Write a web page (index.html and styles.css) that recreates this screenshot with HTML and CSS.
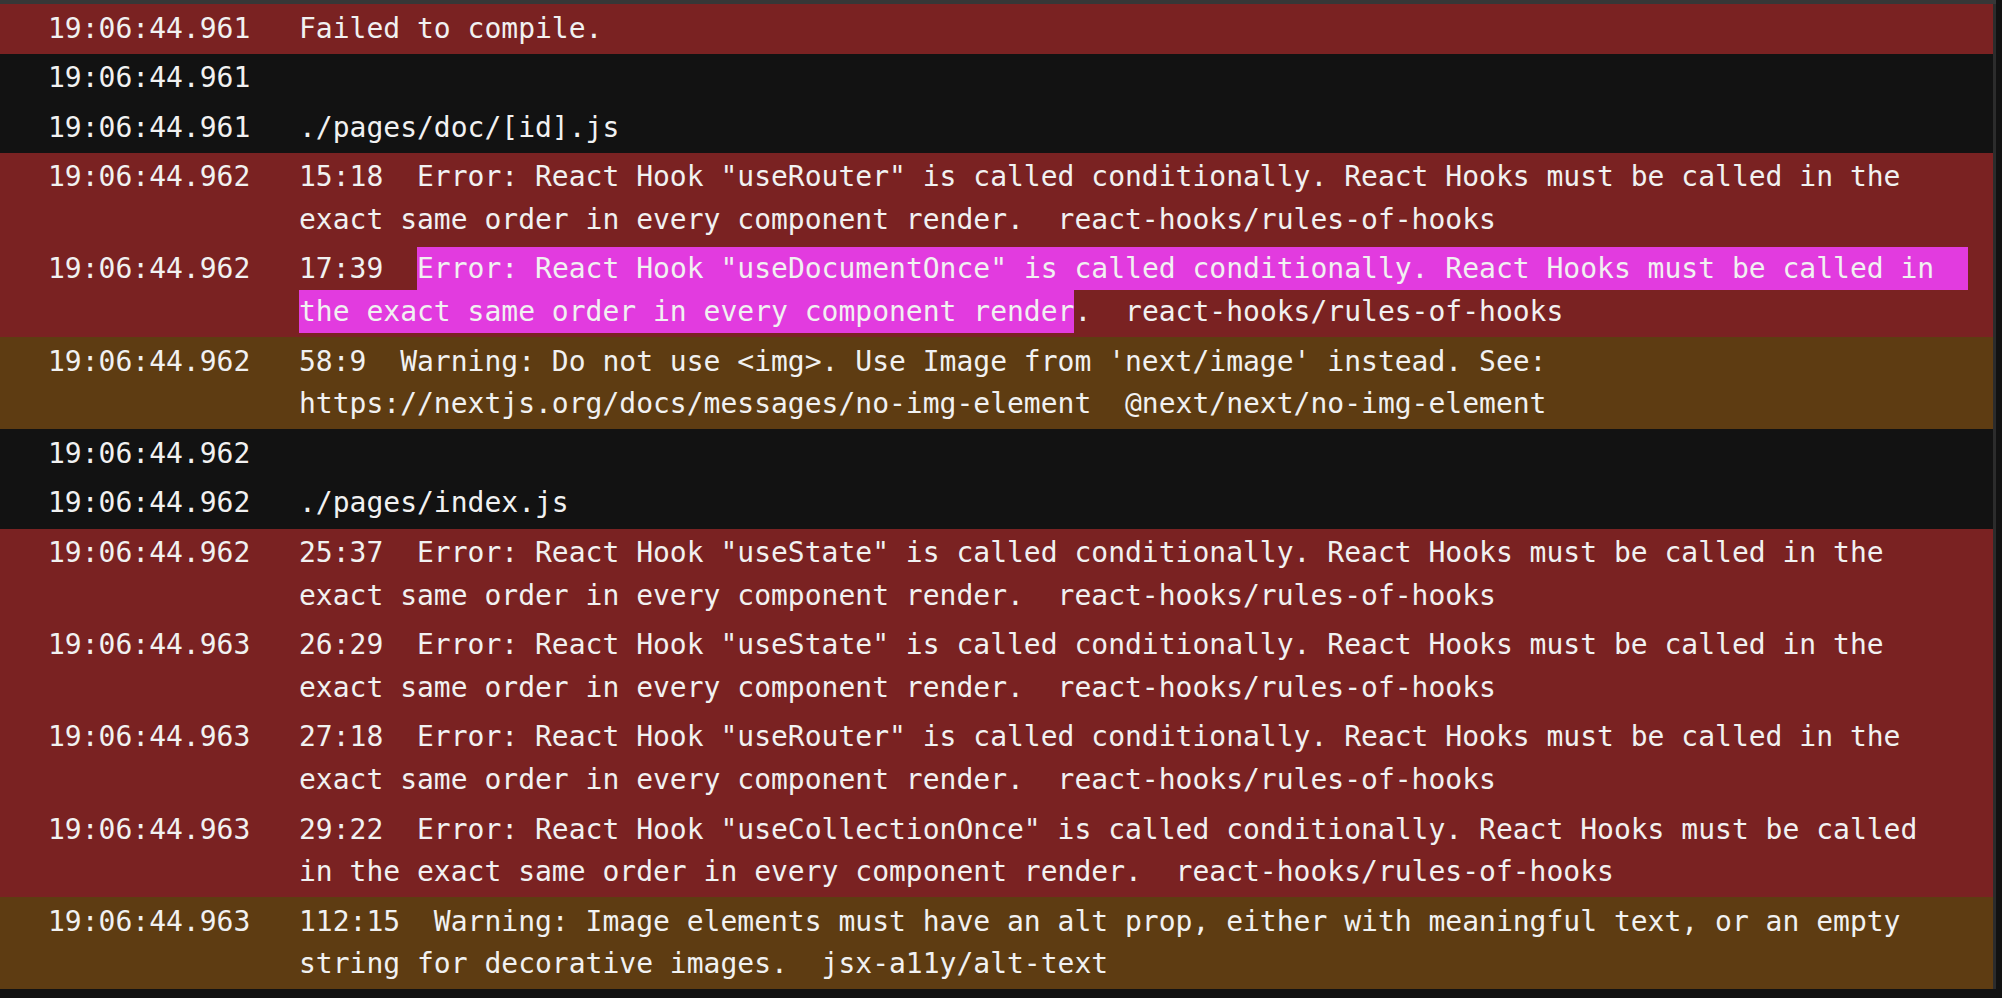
FILE: index.html
```html
<!DOCTYPE html>
<html lang="en">
<head>
<meta charset="utf-8">
<title>Build log</title>
<link rel="stylesheet" href="styles.css">
</head>
<body>
<div class="frame">
  <div class="log">
    <div class="row err"><span class="ts">19:06:44.961</span><span class="msg">Failed to compile.</span></div>
    <div class="row plain"><span class="ts">19:06:44.961</span><span class="msg"></span></div>
    <div class="row plain"><span class="ts">19:06:44.961</span><span class="msg">./pages/doc/[id].js</span></div>
    <div class="row err"><span class="ts">19:06:44.962</span><span class="msg">15:18  Error: React Hook "useRouter" is called conditionally. React Hooks must be called in the exact same order in every component render.  react-hooks/rules-of-hooks</span></div>
    <div class="row err"><span class="ts">19:06:44.962</span><span class="msg fixed">17:39  <span class="sel sel-eol">Error: React Hook "useDocumentOnce" is called conditionally. React Hooks must be called in</span><br><span class="sel">the exact same order in every component render</span>.  react-hooks/rules-of-hooks</span></div>
    <div class="row warn"><span class="ts">19:06:44.962</span><span class="msg">58:9  Warning: Do not use &lt;img&gt;. Use Image from 'next/image' instead. See: https://nextjs.org/docs/messages/no-img-element  @next/next/no-img-element</span></div>
    <div class="row plain"><span class="ts">19:06:44.962</span><span class="msg"></span></div>
    <div class="row plain"><span class="ts">19:06:44.962</span><span class="msg">./pages/index.js</span></div>
    <div class="row err"><span class="ts">19:06:44.962</span><span class="msg">25:37  Error: React Hook "useState" is called conditionally. React Hooks must be called in the exact same order in every component render.  react-hooks/rules-of-hooks</span></div>
    <div class="row err"><span class="ts">19:06:44.963</span><span class="msg">26:29  Error: React Hook "useState" is called conditionally. React Hooks must be called in the exact same order in every component render.  react-hooks/rules-of-hooks</span></div>
    <div class="row err"><span class="ts">19:06:44.963</span><span class="msg">27:18  Error: React Hook "useRouter" is called conditionally. React Hooks must be called in the exact same order in every component render.  react-hooks/rules-of-hooks</span></div>
    <div class="row err"><span class="ts">19:06:44.963</span><span class="msg">29:22  Error: React Hook "useCollectionOnce" is called conditionally. React Hooks must be called in the exact same order in every component render.  react-hooks/rules-of-hooks</span></div>
    <div class="row warn"><span class="ts">19:06:44.963</span><span class="msg">112:15  Warning: Image elements must have an alt prop, either with meaningful text, or an empty string for decorative images.  jsx-a11y/alt-text</span></div>
  </div>
</div>
</body>
</html>
```

FILE: styles.css
```css
html, body {
  margin: 0;
  padding: 0;
}

body {
  background: #121212;
  color: #f1f1f1;
  font-family: "DejaVu Sans Mono", "Liberation Mono", monospace;
  font-size: 28px;
  line-height: 42.6px;
}

.frame {
  width: 1996px;
  border-top: 4px solid #373737;
}

.log {
  width: 1993px;
  border-right: 3px solid #2c2c2c;
}

.row {
  display: grid;
  grid-template-columns: 203px 1650px;
  column-gap: 48px;
  padding: 3.5px 0 3.5px 48px;
  align-items: start;
  min-height: 42.6px;
}

.row.err {
  background: #7a2222;
}

.row.warn {
  background: #5e3c12;
}

.row.plain {
  background: #121212;
}

.ts {
  white-space: pre;
}

.msg {
  white-space: pre-wrap;
  min-height: 42.6px;
}

.msg.fixed {
  white-space: pre;
}

.sel {
  background: #e23bdf;
  padding: 5px 0;
}

.sel-eol {
  padding-right: 34px;
}
```
